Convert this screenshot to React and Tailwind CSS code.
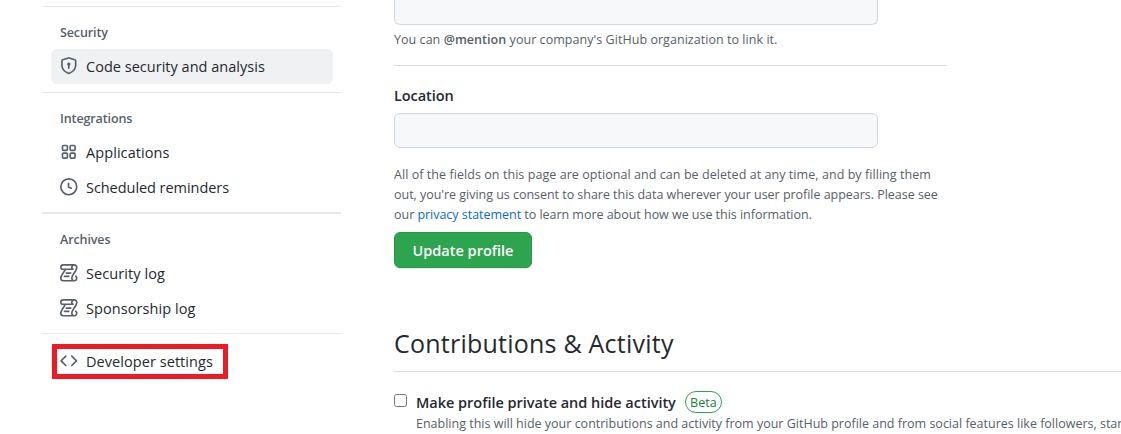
const ICONS = {
  shield: 'm8.533.133 5.25 1.68A1.75 1.75 0 0 1 15 3.48V7c0 1.566-.32 3.182-1.303 4.682-.983 1.498-2.585 2.813-5.032 3.855a1.697 1.697 0 0 1-1.33 0c-2.447-1.042-4.049-2.357-5.032-3.855C1.32 10.182 1 8.566 1 7V3.48a1.755 1.755 0 0 1 1.217-1.667l5.25-1.68a1.748 1.748 0 0 1 1.066 0Zm-.61 1.429.001.001-5.25 1.68a.251.251 0 0 0-.174.237V7c0 1.36.275 2.666 1.057 3.859.784 1.194 2.121 2.342 4.366 3.298a.196.196 0 0 0 .154 0c2.245-.957 3.582-2.103 4.366-3.297C13.225 9.666 13.5 8.358 13.5 7V3.48a.25.25 0 0 0-.174-.238l-5.25-1.68a.25.25 0 0 0-.153 0ZM9.5 6.5c0 .536-.286 1.032-.75 1.3v2.45a.75.75 0 0 1-1.5 0V7.8A1.5 1.5 0 1 1 9.5 6.5Z',
  apps: 'M1.5 3.25c0-.966.784-1.75 1.75-1.75h2.5c.966 0 1.75.784 1.75 1.75v2.5A1.75 1.75 0 0 1 5.75 7.5h-2.5A1.75 1.75 0 0 1 1.5 5.75ZM3.25 3a.25.25 0 0 0-.25.25v2.5c0 .138.112.25.25.25h2.5A.25.25 0 0 0 6 5.75v-2.5A.25.25 0 0 0 5.75 3ZM1.5 10.25c0-.966.784-1.75 1.75-1.75h2.5c.966 0 1.75.784 1.75 1.75v2.5a1.75 1.75 0 0 1-1.75 1.75h-2.5a1.75 1.75 0 0 1-1.75-1.75ZM3.25 10a.25.25 0 0 0-.25.25v2.5c0 .138.112.25.25.25h2.5a.25.25 0 0 0 .25-.25v-2.5a.25.25 0 0 0-.25-.25ZM8.5 3.25c0-.966.784-1.75 1.75-1.75h2.5c.966 0 1.75.784 1.75 1.75v2.5a1.75 1.75 0 0 1-1.75 1.75h-2.5A1.75 1.75 0 0 1 8.5 5.75Zm1.75-.25a.25.25 0 0 0-.25.25v2.5c0 .138.112.25.25.25h2.5a.25.25 0 0 0 .25-.25v-2.5a.25.25 0 0 0-.25-.25ZM8.5 10.25c0-.966.784-1.75 1.75-1.75h2.5c.966 0 1.75.784 1.75 1.75v2.5a1.75 1.75 0 0 1-1.75 1.75h-2.5a1.75 1.75 0 0 1-1.75-1.75Zm1.75-.25a.25.25 0 0 0-.25.25v2.5c0 .138.112.25.25.25h2.5a.25.25 0 0 0 .25-.25v-2.5a.25.25 0 0 0-.25-.25Z',
  clock: 'M8 0a8 8 0 1 1 0 16A8 8 0 0 1 8 0ZM1.5 8a6.5 6.5 0 1 0 13 0 6.5 6.5 0 0 0-13 0Zm7-3.25v2.992l2.028.812a.75.75 0 0 1-.557 1.392l-2.5-1A.751.751 0 0 1 7 8.25v-3.5a.75.75 0 0 1 1.5 0Z',
  log: 'M5 8.25a.75.75 0 0 1 .75-.75h4a.75.75 0 0 1 0 1.5h-4A.75.75 0 0 1 5 8.25ZM4 10.5A.75.75 0 0 0 4 12h4a.75.75 0 0 0 0-1.5H4ZM13-.005c1.654 0 3 1.328 3 3 0 .982-.338 1.933-.783 2.818-.443.879-1.028 1.758-1.582 2.588l-.011.017c-.568.853-1.104 1.659-1.501 2.446-.398.789-.623 1.494-.623 2.136a1.5 1.5 0 1 0 2.333-1.248.75.75 0 0 1 .834-1.246A3 3 0 0 1 13 16H3a3 3 0 0 1-3-3c0-1.582.891-3.135 1.777-4.506.209-.322.418-.637.623-.946.473-.709.923-1.386 1.287-2.048H2.51c-.576 0-1.381-.133-1.907-.783A2.68 2.68 0 0 1 0 2.995a3 3 0 0 1 3-3Zm0 1.5a1.5 1.5 0 0 0-1.5 1.5c0 .476.223.834.667 1.132A.75.75 0 0 1 11.75 5.5H5.368c-.467 1.003-1.141 2.015-1.773 2.963-.192.289-.381.571-.558.845C2.13 10.711 1.5 11.916 1.5 13A1.5 1.5 0 0 0 3 14.5h7.401A2.989 2.989 0 0 1 10 13c0-.979.338-1.928.784-2.812.441-.874 1.023-1.748 1.575-2.576l.017-.026c.568-.853 1.103-1.658 1.501-2.448.398-.79.623-1.497.623-2.143 0-.838-.669-1.5-1.5-1.5Zm-10 0a1.5 1.5 0 0 0-1.5 1.5c0 .321.1.569.27.778.097.12.325.227.74.227h7.674A2.737 2.737 0 0 1 10 2.995c0-.546.146-1.059.401-1.5Z',
  code: 'm11.28 3.22 4.25 4.25a.75.75 0 0 1 0 1.06l-4.25 4.25a.749.749 0 0 1-1.275-.326.749.749 0 0 1 .215-.734L13.94 8l-3.72-3.72a.749.749 0 0 1 .326-1.275.749.749 0 0 1 .734.215Zm-6.56 0a.751.751 0 0 1 1.042.018.751.751 0 0 1 .018 1.042L2.06 8l3.72 3.72a.749.749 0 0 1-.326 1.275.749.749 0 0 1-.734-.215L.47 8.53a.75.75 0 0 1 0-1.06Z',
};

function Item({ icon, active, tracking = 'tracking-[0.08px]', children }) {
  return (
    <a
      className={`ml-[9px] flex h-[35px] w-[282px] shrink-0 items-center rounded-md pl-[8.6px] text-[14.5px] text-[#24292f] ${active ? 'bg-[#f0f1f3]' : ''}`}
    >
      <svg viewBox="0 0 16 16" className="mr-[8.8px] mb-[1px] h-[17.6px] w-[17.6px] shrink-0 overflow-visible fill-[#57606a]">
        <path d={ICONS[icon]} />
      </svg>
      <span className={`whitespace-nowrap ${tracking}`}>{children}</span>
    </a>
  );
}

function GroupTitle({ children }) {
  return (
    <h3 className="flex h-[20px] shrink-0 items-center pl-[18px] text-[12.5px] font-semibold tracking-[-0.1px] text-[#57606a]">
      {children}
    </h3>
  );
}

function Sidebar() {
  return (
    <nav className="ml-[42px] flex w-[299px] shrink-0 flex-col pt-[6px]">
      <div className="h-px shrink-0 bg-[#e7e9eb]" />
      <div className="h-[16px] shrink-0" />
      <GroupTitle>Security</GroupTitle>
      <div className="h-[6px] shrink-0" />
      <Item icon="shield" active tracking="tracking-[0.02px]">Code security and analysis</Item>
      <div className="mt-[8px] h-px shrink-0 bg-[#e7e9eb]" />
      <div className="h-[16px] shrink-0" />
      <GroupTitle>Integrations</GroupTitle>
      <div className="h-[6px] shrink-0" />
      <Item icon="apps">Applications</Item>
      <Item icon="clock" tracking="tracking-[-0.05px]">Scheduled reminders</Item>
      <div className="mt-[7px] h-[2px] shrink-0 bg-[#e7e9eb]" />
      <div className="h-[16px] shrink-0" />
      <GroupTitle>Archives</GroupTitle>
      <div className="h-[6px] shrink-0" />
      <Item icon="log">Security log</Item>
      <Item icon="log">Sponsorship log</Item>
      <div className="mt-[7px] h-px shrink-0 bg-[#e7e9eb]" />
      <div className="mt-[10px] ml-[10px] flex h-[35px] w-[176px] shrink-0 items-center border-[5px] border-[#ed1c24]">
        <div className="-ml-[15px]">
          <Item icon="code" tracking="tracking-[0.06px]">Developer settings</Item>
        </div>
      </div>
    </nav>
  );
}

function Main() {
  return (
    <main className="ml-[53px] flex w-[727px] shrink-0 flex-col overflow-hidden text-[#24292f]">
      <div className="h-[25px] w-[484px] shrink-0 rounded-b-md border border-t-0 border-[#d0d7de] bg-[#f6f8fa]" />
      <p className="mt-[5px] h-[20px] shrink-0 whitespace-nowrap text-[12.5px] leading-[20px] tracking-[0.045px] text-[#57606a]">
        You can <strong className="font-semibold">@mention</strong> your company's GitHub organization to link it.
      </p>
      <div className="mt-[15px] h-px w-[552px] shrink-0 bg-[#d8dee4]" />
      <label className="mt-[20px] h-[20px] shrink-0 text-[14.5px] leading-[20px] font-semibold tracking-[-0.08px]">Location</label>
      <div className="mt-[7px] h-[35px] w-[484px] shrink-0 rounded-md border border-[#d0d7de] bg-[#f6f8fa]" />
      <p className="mt-[17px] shrink-0 whitespace-nowrap text-[12.5px] leading-[20px] text-[#57606a]">
        <span className="block tracking-[0.06px]">All of the fields on this page are optional and can be deleted at any time, and by filling them</span>
        <span className="block tracking-[-0.03px]">out, you're giving us consent to share this data wherever your user profile appears. Please see</span>
        <span className="block tracking-[-0.03px]">
          our <a className="text-[#0969da]">privacy statement</a> to learn more about how we use this information.
        </span>
      </p>
      <button className="mt-[7px] flex h-[36px] w-[138px] shrink-0 items-center justify-center rounded-md border border-[#2a964a] bg-[#2da44e] pt-[2px] text-[14.5px] font-semibold text-white shadow-[0_1px_0_rgba(27,31,36,0.1)]">
        Update profile
      </button>
      <h2 className="mt-[57px] h-[36px] shrink-0 text-[25px] leading-[36px] tracking-[0.23px]">Contributions &amp; Activity</h2>
      <div className="mt-[10px] h-px shrink-0 bg-[#d8dee4]" />
      <div className="mt-[19px] flex h-[22px] shrink-0 items-center">
        <span className="mb-[4px] h-[13px] w-[13px] rounded-[2.5px] border border-[#767676] bg-white" />
        <span className="ml-[9px] whitespace-nowrap pt-[2px] text-[14.5px] leading-[22px] font-semibold tracking-[-0.02px]">Make profile private and hide activity</span>
        <span className="ml-[9px] flex h-[22px] w-[37px] items-center justify-center rounded-full border border-[#2da44e] pt-[2px] text-[12.5px] text-[#1a7f37]">
          Beta
        </span>
      </div>
      <p className="mt-px ml-[22px] h-[20px] shrink-0 whitespace-nowrap text-[12.5px] leading-[20px] text-[#57606a]">
        Enabling this will hide your contributions and activity from your GitHub profile and from social features like followers, star
      </p>
    </main>
  );
}

export default function App() {
  return (
    <div className="flex h-[434px] w-[1121px] overflow-hidden bg-white font-['Open_Sans','Noto_Sans',sans-serif]">
      <Sidebar />
      <Main />
    </div>
  );
}
